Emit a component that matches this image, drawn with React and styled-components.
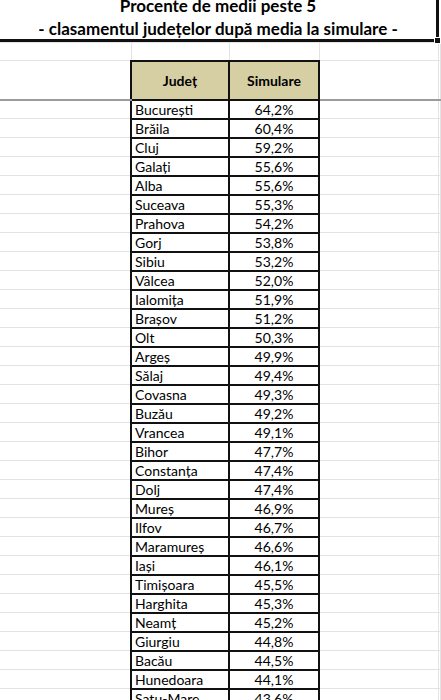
import React from 'react'
import styled, { createGlobalStyle } from 'styled-components'

const GlobalStyle = createGlobalStyle`
  html, body {
    margin: 0;
    padding: 0;
    background: #fff;
  }
  body {
    font-family: Lato, "Open Sans", "Noto Sans", sans-serif;
    color: #000;
  }
`

const Page = styled.div`
  width: 441px;
  height: 700px;
  overflow: hidden;
  background: #fff;
`

const TitleBlock = styled.div`
  position: relative;
  display: flow-root;
  box-sizing: border-box;
  width: 439px;
  height: 42px;
  border-bottom: 3px solid #111;
  border-right: 3px solid #111;
  text-align: center;
  font-weight: 700;
  font-size: 17px;
  line-height: 23px;

  /* excel fill handle on the selection corner */
  &::after {
    content: '';
    position: absolute;
    right: -5px;
    bottom: -5px;
    width: 5px;
    height: 5px;
    background: #111;
    border: 1px solid #fff;
  }
`

const TitleText = styled.div`
  margin-top: -6px;
`

const Sheet = styled.table`
  border-collapse: collapse;
  table-layout: fixed;
  width: 441px;
  font-size: 14px;
`

const Row = styled.tr`
  height: ${p => p.$h || 19}px;
`

const Filler = styled.td`
  padding: 0;
  border: 1px solid #e3e3e3;
  border-left: ${p => (p.$first ? 'none' : '1px solid #e3e3e3')};
  border-bottom: ${p => (p.$dark ? '2px solid #9c9c9c' : '1px solid #e3e3e3')};
`

const HeadCell = styled.th`
  padding: 0;
  background: #d6cfa4;
  border: 2px solid #111;
  font-weight: 700;
  font-size: 14px;
  text-align: center;
`

const NameCell = styled.td`
  padding: 0 0 0 3px;
  border: 2px solid #111;
  text-align: left;
  white-space: nowrap;
  overflow: hidden;
  line-height: 17px;
`

const ValueCell = styled(NameCell)`
  padding: 0;
  text-align: center;
`

const rows = [
  ['București', '64,2%'],
  ['Brăila', '60,4%'],
  ['Cluj', '59,2%'],
  ['Galați', '55,6%'],
  ['Alba', '55,6%'],
  ['Suceava', '55,3%'],
  ['Prahova', '54,2%'],
  ['Gorj', '53,8%'],
  ['Sibiu', '53,2%'],
  ['Vâlcea', '52,0%'],
  ['Ialomița', '51,9%'],
  ['Brașov', '51,2%'],
  ['Olt', '50,3%'],
  ['Argeș', '49,9%'],
  ['Sălaj', '49,4%'],
  ['Covasna', '49,3%'],
  ['Buzău', '49,2%'],
  ['Vrancea', '49,1%'],
  ['Bihor', '47,7%'],
  ['Constanța', '47,4%'],
  ['Dolj', '47,4%'],
  ['Mureș', '46,9%'],
  ['Ilfov', '46,7%'],
  ['Maramureș', '46,6%'],
  ['Iași', '46,1%'],
  ['Timișoara', '45,5%'],
  ['Harghita', '45,3%'],
  ['Neamț', '45,2%'],
  ['Giurgiu', '44,8%'],
  ['Bacău', '44,5%'],
  ['Hunedoara', '44,1%'],
  ['Satu-Mare', '43,6%'],
]

const App = () => (
  <Page>
    <GlobalStyle />
    <TitleBlock>
      <TitleText>Procente de medii peste 5</TitleText>
      <div>- clasamentul județelor după media la simulare -</div>
    </TitleBlock>
    <Sheet>
      <colgroup>
        <col style={{ width: 131 }} />
        <col style={{ width: 98 }} />
        <col style={{ width: 90 }} />
        <col style={{ width: 119 }} />
        <col />
      </colgroup>
      <tbody>
        <Row $h={18}>
          <Filler $first />
          <Filler />
          <Filler />
          <Filler />
          <Filler />
        </Row>
        <Row $h={39}>
          <Filler $first $dark />
          <HeadCell>Județ</HeadCell>
          <HeadCell>Simulare</HeadCell>
          <Filler $dark />
          <Filler $dark />
        </Row>
        {rows.map(([name, value]) => (
          <Row key={name}>
            <Filler $first />
            <NameCell>{name}</NameCell>
            <ValueCell>{value}</ValueCell>
            <Filler />
            <Filler />
          </Row>
        ))}
      </tbody>
    </Sheet>
  </Page>
)

export default App
